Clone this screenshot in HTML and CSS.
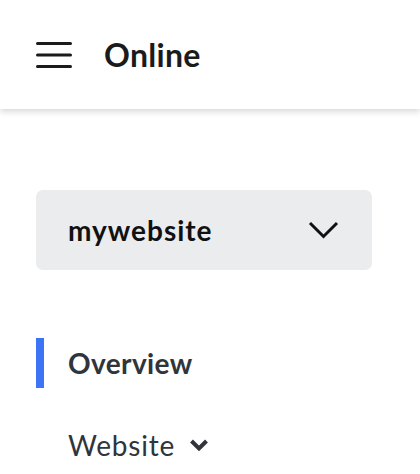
FILE: index.html
```html
<!DOCTYPE html>
<html lang="en">
<head>
    <meta charset="UTF-8">
    <meta name="viewport" content="width=device-width, initial-scale=1.0">
    <title>Online</title>
    <link rel="stylesheet" href="styles.css">
</head>
<body>
    <!-- top bar -->
    <header class="topbar">
        <button class="menu-btn" aria-label="Menu">
            <svg width="36" height="30" viewBox="0 0 36 30">
                <path d="M1.5 3.5h33M1.5 15h33M1.5 26.5h33" stroke="#1b1b1b" stroke-width="3" stroke-linecap="round"/>
            </svg>
        </button>
        <span class="title">Online</span>
    </header>

    <div class="sidebar">
        <!-- site picker -->
        <div class="site-select">
            <span>mywebsite</span>
            <svg width="31" height="18" viewBox="0 0 31 18">
                <path d="M2 2l13.5 13.5L29 2" fill="none" stroke="#111" stroke-width="3"/>
            </svg>
        </div>

        <ul class="nav">
            <li class="nav-item active">Overview</li>
            <li class="nav-item">Website
                <svg width="20" height="14" viewBox="0 0 20 14">
                    <path d="M2.5 3l7.5 7.5L17.5 3" fill="none" stroke="#2f353b" stroke-width="4"/>
                </svg>
            </li>
        </ul>
    </div>
</body>
</html>
```

FILE: styles.css
```css
body {
    margin: 0;
    font-family: Lato, 'Liberation Sans', sans-serif;
    background: #fff;
    color: #2f353b;
}

/* top bar */
.topbar {
    height: 109px;
    display: flex;
    align-items: center;
    padding: 0 36px;
    gap: 32px;
    box-shadow: 0 3px 6px rgba(0,0,0,0.15);
}

.menu-btn {
    border: 0;
    background: none;
    padding: 0;
    display: flex;
}

.title {
    font-size: 32px;
    font-weight: 700;
    color: #1b1b1b;
    letter-spacing: 0.3px;
}

.sidebar {
    padding: 81px 48px 0 36px;
}

/* site picker */
.site-select {
    height: 80px;
    background: #ebecee;
    border-radius: 7px;
    display: flex;
    align-items: center;
    justify-content: space-between;
    padding: 0 33px 0 32px;
    font-size: 28px;
    font-weight: 700;
    color: #111;
    letter-spacing: 1px;
}

.nav {
    list-style: none;
    margin: 68px 0 0;
    padding: 0;
}

.nav-item {
    display: flex;
    align-items: center;
    gap: 14px;
    height: 50px;
    padding-left: 32px;
    font-size: 28px;
    letter-spacing: 0.8px;
    margin-top: 32px;
}

.nav-item:first-child {
    margin-top: 0;
}

.nav-item.active {
    font-weight: 700;
    letter-spacing: 0.4px;
    border-left: 8px solid #3d74f5;
    padding-left: 24px;
}
```
